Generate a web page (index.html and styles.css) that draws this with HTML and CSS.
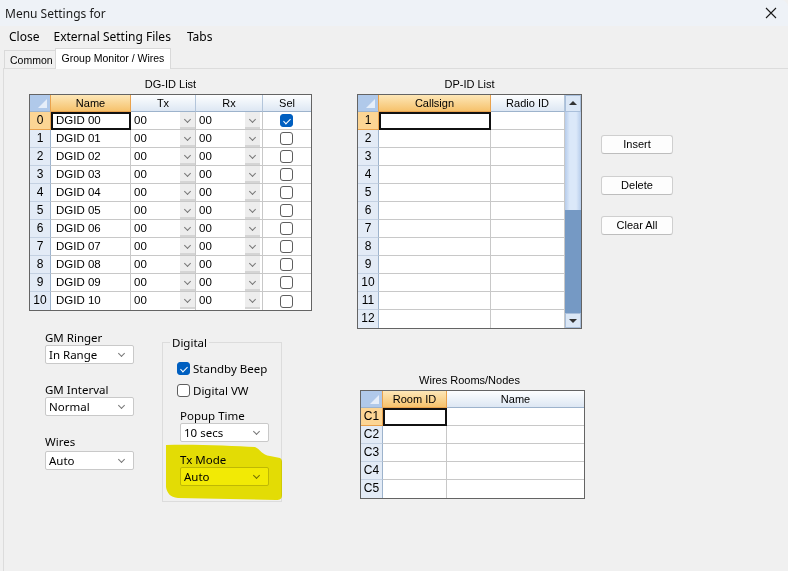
FILE: index.html
```html
<!DOCTYPE html>
<html>
<head>
<meta charset="utf-8">
<link rel="stylesheet" href="styles.css">
</head>
<body>
<div class="window">
  <div class="titlebar">
    <span class="title">Menu Settings for</span>
    <svg class="x" width="12" height="12" viewBox="0 0 12 12"><path d="M1 1 L11 11 M11 1 L1 11" stroke="#1a1a1a" stroke-width="1.1" fill="none"/></svg>
  </div>
  <div class="menubar">
    <span class="mi">Close</span><span class="mi">External Setting Files</span><span class="mi">Tabs</span>
  </div>
  <div class="tabs">
    <div class="tab">Common</div>
    <div class="tab active">Group Monitor / Wires</div>
  </div>
  <div class="page">
    <div class="col-left">
      <div class="caption">DG-ID List</div>
      <div class="grid dg">
        <div class="corner"></div><div class="h sel">Name</div><div class="h">Tx</div><div class="h">Rx</div><div class="h">Sel</div>
        <div class="rh sel">0</div><div class="name cur">DGID 00</div><div class="dd"><span>00</span><i class="ddb"></i></div><div class="dd"><span>00</span><i class="ddb rx"></i></div><div class="chk"><span class="cb on"></span></div>
        <div class="rh">1</div><div class="name">DGID 01</div><div class="dd"><span>00</span><i class="ddb"></i></div><div class="dd"><span>00</span><i class="ddb rx"></i></div><div class="chk"><span class="cb"></span></div>
        <div class="rh">2</div><div class="name">DGID 02</div><div class="dd"><span>00</span><i class="ddb"></i></div><div class="dd"><span>00</span><i class="ddb rx"></i></div><div class="chk"><span class="cb"></span></div>
        <div class="rh">3</div><div class="name">DGID 03</div><div class="dd"><span>00</span><i class="ddb"></i></div><div class="dd"><span>00</span><i class="ddb rx"></i></div><div class="chk"><span class="cb"></span></div>
        <div class="rh">4</div><div class="name">DGID 04</div><div class="dd"><span>00</span><i class="ddb"></i></div><div class="dd"><span>00</span><i class="ddb rx"></i></div><div class="chk"><span class="cb"></span></div>
        <div class="rh">5</div><div class="name">DGID 05</div><div class="dd"><span>00</span><i class="ddb"></i></div><div class="dd"><span>00</span><i class="ddb rx"></i></div><div class="chk"><span class="cb"></span></div>
        <div class="rh">6</div><div class="name">DGID 06</div><div class="dd"><span>00</span><i class="ddb"></i></div><div class="dd"><span>00</span><i class="ddb rx"></i></div><div class="chk"><span class="cb"></span></div>
        <div class="rh">7</div><div class="name">DGID 07</div><div class="dd"><span>00</span><i class="ddb"></i></div><div class="dd"><span>00</span><i class="ddb rx"></i></div><div class="chk"><span class="cb"></span></div>
        <div class="rh">8</div><div class="name">DGID 08</div><div class="dd"><span>00</span><i class="ddb"></i></div><div class="dd"><span>00</span><i class="ddb rx"></i></div><div class="chk"><span class="cb"></span></div>
        <div class="rh">9</div><div class="name">DGID 09</div><div class="dd"><span>00</span><i class="ddb"></i></div><div class="dd"><span>00</span><i class="ddb rx"></i></div><div class="chk"><span class="cb"></span></div>
        <div class="rh lastrow">10</div><div class="name lastrow">DGID 10</div><div class="dd lastrow"><span>00</span><i class="ddb"></i></div><div class="dd lastrow"><span>00</span><i class="ddb rx"></i></div><div class="chk lastrow"><span class="cb"></span></div>
      </div>
      <div class="lower">
        <div class="combos">
          <div class="field"><div class="lbl">GM Ringer</div><div class="combo">In Range</div></div>
          <div class="field"><div class="lbl">GM Interval</div><div class="combo">Normal</div></div>
          <div class="field"><div class="lbl wl">Wires</div><div class="combo">Auto</div></div>
        </div>
        <fieldset class="digital">
          <legend>Digital</legend>
          <div class="inner">
            <div class="check first"><span class="cb on"></span><span class="ctext">Standby Beep</span></div>
            <div class="check"><span class="cb"></span><span class="ctext">Digital VW</span></div>
            <div class="glbl">Popup Time</div>
            <div class="combo">10 secs</div>
            <div class="glbl">Tx Mode</div>
            <div class="combo">Auto</div>
          </div>
          <svg class="hl" width="120" height="58" viewBox="0 0 120 58"><path d="M2 2 C30 1 70 3 91 4 C96 6 98 12 106 13 L116 15 C118 16 118 18 118 20 L118 52 C118 56 116 57 112 57 L14 55 C6 54 3 50 2 44 Z" fill="#f2ea05"/></svg>
        </fieldset>
      </div>
    </div>
    <div class="col-mid">
      <div class="caption">DP-ID List</div>
      <div class="dpwrap">
        <div class="grid dp">
          <div class="corner"></div><div class="h sel">Callsign</div><div class="h">Radio ID</div>
          <div class="rh sel">1</div><div class="cur"></div><div></div>
          <div class="rh">2</div><div></div><div></div>
          <div class="rh">3</div><div></div><div></div>
          <div class="rh">4</div><div></div><div></div>
          <div class="rh">5</div><div></div><div></div>
          <div class="rh">6</div><div></div><div></div>
          <div class="rh">7</div><div></div><div></div>
          <div class="rh">8</div><div></div><div></div>
          <div class="rh">9</div><div></div><div></div>
          <div class="rh">10</div><div></div><div></div>
          <div class="rh">11</div><div></div><div></div>
          <div class="rh lastrow">12</div><div class="lastrow"></div><div class="lastrow"></div>
        </div>
        <div class="sb">
          <div class="sbbtn up"></div>
          <div class="thumb"></div>
          <div class="track"></div>
          <div class="sbbtn down"></div>
        </div>
      </div>
      <div class="caption wcap">Wires Rooms/Nodes</div>
      <div class="grid wires">
        <div class="corner"></div><div class="h sel">Room ID</div><div class="h">Name</div>
        <div class="rh sel">C1</div><div class="cur"></div><div></div>
        <div class="rh">C2</div><div></div><div></div>
        <div class="rh">C3</div><div></div><div></div>
        <div class="rh">C4</div><div></div><div></div>
        <div class="rh lastrow">C5</div><div class="lastrow"></div><div class="lastrow"></div>
      </div>
    </div>
    <div class="col-btns">
      <div class="btn">Insert</div>
      <div class="btn">Delete</div>
      <div class="btn">Clear All</div>
    </div>
  </div>
</div>
</body>
</html>
```
FILE: styles.css
```css
html, body {
  margin: 0;
  padding: 0;
}
body {
  background: #f0f0f0;
  width: 788px;
  height: 571px;
  overflow: hidden;
  font-family: "Noto Sans", "Liberation Sans", sans-serif;
  color: #000;
}
.window {
  width: 788px;
  height: 571px;
  display: flex;
  flex-direction: column;
}
.titlebar {
  height: 26px;
  flex: none;
  background: #eef2f7;
  display: flex;
  align-items: center;
  justify-content: space-between;
  padding: 0 11px 0 5px;
  box-sizing: border-box;
  font-size: 12px;
  border-top-right-radius: 7px;
}
.title { color: #1b1b1b; }
.menubar {
  height: 20px;
  flex: none;
  display: flex;
  align-items: center;
  padding-left: 2px;
  font-size: 12px;
}
.mi { padding: 0 7px; }
.mi:last-child { padding-left: 9px; }
.tabs {
  height: 22px;
  flex: none;
  display: flex;
  align-items: flex-end;
  padding-left: 4px;
  font: 10.5px "Liberation Sans", Arial, sans-serif;
}
.tab {
  height: 18px;
  line-height: 18px;
  padding: 0 2px 0 5px;
  border: 1px solid #d9d9d9;
  border-bottom: 0;
  box-sizing: border-box;
  background: #f0f0f0;
}
.tab.active {
  height: 21px;
  line-height: 18px;
  padding: 0 6px;
  background: #fff;
  margin-left: -1px;
  position: relative;
  top: 1px;
}
.page {
  flex: 1;
  display: flex;
  align-items: flex-start;
  margin-left: 3px;
  border-left: 1px solid #dcdcdc;
  border-top: 1px solid #dcdcdc;
  padding: 9px 0 0 25px;
}
.caption {
  height: 16px;
  line-height: 16px;
  text-align: center;
  font: 11px "Liberation Sans", Arial, sans-serif;
}
.col-left { width: 283px; flex: none; }
.col-mid { width: 225px; flex: none; margin-left: 45px; }
.col-btns { margin-left: 19px; padding-top: 57px; }

/* grids */
.grid {
  display: grid;
  border: 1px solid #646464;
  background: #fff;
  font: 11px "Liberation Sans", Arial, sans-serif;
  grid-template-rows: 17px;
  grid-auto-rows: 18px;
  box-sizing: border-box;
}
.grid > div {
  box-sizing: border-box;
  border-right: 1px solid #c8c8c8;
  border-bottom: 1px solid #c8c8c8;
  line-height: 17px;
  white-space: nowrap;
  overflow: hidden;
  position: relative;
}
.grid > div.lastrow { border-bottom: 0; }
.dg {
  width: 283px;
  grid-template-columns: 21px 80px 65px 67px 48px;
}
.dg > div:nth-child(5n) { border-right: 0; }
.dp {
  width: 207px;
  border: 0;
  grid-template-columns: 21px 112px 74px;
}
.wires {
  width: 225px;
  margin-left: 3px;
  grid-template-columns: 22px 64px 137px;
}
.wires > div:nth-child(3n) { border-right: 0; }
.grid > .h {
  background: linear-gradient(#fdfeff, #dde7f3);
  border-right-color: #b3c5da;
  border-bottom-color: #9db3cc;
  text-align: center;
  line-height: 16px;
}
.grid > .h.sel {
  background: linear-gradient(#fde7b8, #f6c26c);
  border-right-color: #e9a24d;
  border-bottom-color: #e9a24d;
}
.grid > .corner {
  background: #b0c9ea;
  border-right-color: #e9a24d;
  border-bottom-color: #9db3cc;
}
.corner::after {
  content: "";
  position: absolute;
  right: 3px;
  bottom: 3px;
  width: 0;
  height: 0;
  border-left: 9px solid transparent;
  border-bottom: 9px solid #e6eef9;
}
.grid > .rh {
  background: #e3ebf6;
  text-align: center;
  border-right-color: #9db3cc;
  border-bottom-color: #c4d1e2;
  font-size: 12px;
}
.grid > .rh.sel {
  background: #fcd594;
  border-right-color: #e9a24d;
  border-bottom-color: #e9a24d;
}
.grid > .name { padding-left: 5px; font-size: 11.5px; }
.grid > .cur {
  outline: 2px solid #111;
  outline-offset: -2px;
  overflow: visible;
  z-index: 1;
}
.grid > .dd {
  display: flex;
  justify-content: space-between;
  padding-left: 3px;
  font-size: 11.5px;
}
.ddb {
  display: block;
  width: 15px;
  height: 17px;
  background: #ededed;
  border-bottom: 2px solid #d5d5d5;
  box-sizing: border-box;
  position: relative;
}
.ddb.rx { margin-right: 2px; }
.ddb::after, .combo::after {
  content: "";
  position: absolute;
  width: 4px;
  height: 4px;
  border-right: 1px solid #777;
  border-bottom: 1px solid #777;
  transform: rotate(45deg);
}
.ddb::after { left: 5px; top: 5px; }
.grid > .chk {
  display: flex;
  align-items: center;
  justify-content: center;
  padding-right: 2px;
}
.cb {
  display: inline-block;
  width: 13px;
  height: 13px;
  box-sizing: border-box;
  border: 1px solid #5e5e5e;
  border-radius: 3px;
  background: #fff;
  position: relative;
  flex: none;
}
.cb.on {
  background: #005fc0;
  border-color: #005fc0;
}
.cb.on::after {
  content: "";
  position: absolute;
  left: 4px;
  top: 1.5px;
  width: 3px;
  height: 6px;
  border-right: 1px solid #fff;
  border-bottom: 1px solid #fff;
  transform: rotate(45deg);
}

/* DP list with scrollbar */
.dpwrap {
  display: flex;
  width: 225px;
  border: 1px solid #646464;
  box-sizing: border-box;
  background: #fff;
}
.sb {
  width: 16px;
  display: flex;
  flex-direction: column;
}
.sbbtn {
  height: 17px;
  background: #dbe7f6;
  border: 1px solid #a9bfdb;
  box-sizing: border-box;
  position: relative;
}
.sbbtn.down { height: 15px; }
.sbbtn::after {
  content: "";
  position: absolute;
  left: 3px;
  width: 0;
  height: 0;
  border-left: 4px solid transparent;
  border-right: 4px solid transparent;
}
.sbbtn.up::after { top: 5px; border-bottom: 4px solid #333; }
.sbbtn.down::after { top: 5px; border-top: 4px solid #333; }
.thumb {
  height: 98px;
  background: linear-gradient(90deg, #b6cceb, #dbe8f9 30%, #dbe8f9 70%, #b6cceb);
}
.track {
  height: 103px;
  background: #7599c4;
}
.wcap { margin-top: 45px; }

/* buttons */
.btn {
  width: 72px;
  height: 19px;
  box-sizing: border-box;
  border: 1px solid #cfcfcf;
  border-bottom-color: #bdbdbd;
  border-radius: 3px;
  background: #fdfdfd;
  text-align: center;
  font: 11px/17px "Liberation Sans", Arial, sans-serif;
  margin-bottom: 22px;
}
.btn + .btn + .btn { margin-top: -1px; }

/* lower left */
.lower {
  display: flex;
  align-items: flex-start;
  margin-top: 19px;
}
.combos { margin-left: 16px; width: 89px; }
.field { margin-bottom: 18px; }
.lbl {
  font-size: 11.5px;
  line-height: 15px;
  height: 15px;
}
.lbl.wl { height: 17px; }
.combo {
  width: 89px;
  height: 19px;
  box-sizing: border-box;
  border: 1px solid #c9c9c9;
  border-radius: 2px;
  background: #fff;
  font-size: 11.5px;
  line-height: 17px;
  padding-left: 3px;
  position: relative;
}
.combo::after { right: 9px; top: 5px; }
.digital {
  margin: 5px 0 0 28px;
  padding: 0;
  width: 120px;
  height: 167px;
  box-sizing: border-box;
  border: 1px solid #dcdcdc;
  position: relative;
  min-width: 0;
}
.digital legend {
  margin-left: 7px;
  padding: 0 2px;
  font-size: 11.5px;
  line-height: 15px;
}
.inner { padding-left: 14px; }
.check {
  display: flex;
  align-items: center;
  height: 17px;
  margin-top: 5px;
  font-size: 11.5px;
}
.check.first { margin-top: 10px; }
.ctext { margin-left: 3px; }
.glbl {
  font-size: 11.5px;
  line-height: 15px;
  margin: 9px 0 0 3px;
}
.inner .combo { margin-left: 3px; }
.inner .combo + .glbl { margin-top: 10px; }
.hl {
  position: absolute;
  left: 1px;
  top: 93px;
  mix-blend-mode: multiply;
}
```
